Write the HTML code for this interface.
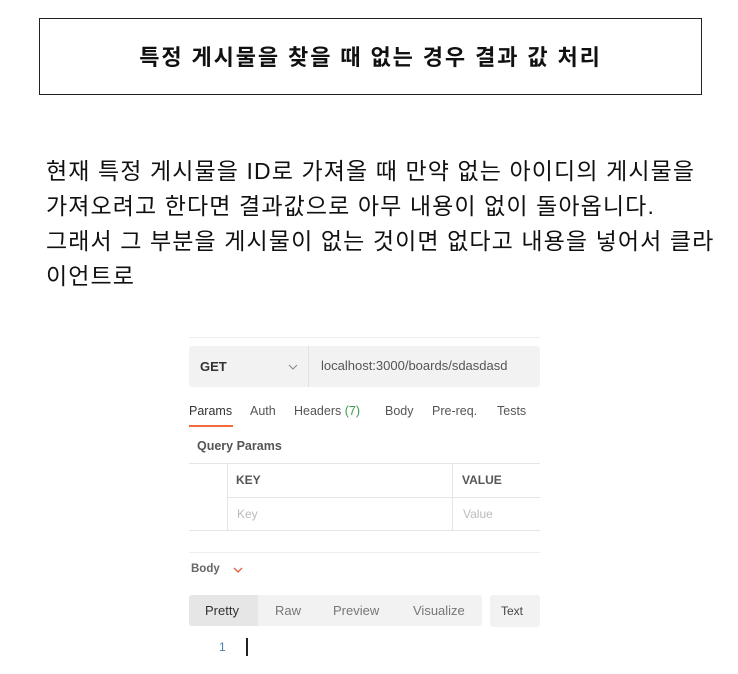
<!DOCTYPE html><html><head><meta charset="utf-8"><style>
body{margin:0;width:738px;height:674px;background:#fff;position:relative;overflow:hidden;font-family:"Liberation Sans","Noto Sans CJK KR",sans-serif;color:#111}
.a{position:absolute;white-space:nowrap}
.t{font-size:23px;line-height:35px;left:46px;letter-spacing:1.1px}
.p{font-size:12.5px;color:#555}
</style></head><body>
<div class="a" style="left:39px;top:18px;width:661px;height:75px;border:1px solid #222"></div>
<div class="a" style="left:39px;top:40px;width:663px;text-align:center;font-size:22px;font-weight:bold;letter-spacing:1.9px">특정 게시물을 찾을 때 없는 경우 결과 값 처리</div>
<div class="a t" style="top:154px">현재 특정 게시물을 ID로 가져올 때 만약 없는 아이디의 게시물을</div>
<div class="a t" style="top:189px">가져오려고 한다면 결과값으로 아무 내용이 없이 돌아옵니다.</div>
<div class="a t" style="top:224px">그래서 그 부분을 게시물이 없는 것이면 없다고 내용을 넣어서 클라</div>
<div class="a t" style="top:259px">이언트로</div>

<div class="a" style="left:189px;top:337px;width:351px;height:1px;background:#eee"></div>
<div class="a" style="left:189px;top:346px;width:351px;height:41px;background:#f2f2f2;border-radius:3px"></div>
<div class="a" style="left:308px;top:346px;width:1px;height:41px;background:#e2e2e2"></div>
<div class="a" style="left:200px;top:359px;font-size:13px;font-weight:bold;color:#333">GET</div>
<svg class="a" style="left:288px;top:364px" width="10" height="6"><path d="M1 1l4 4 4-4" fill="none" stroke="#888" stroke-width="1"/></svg>
<div class="a" style="left:321px;top:358px;font-size:13px;color:#555">localhost:3000/boards/sdasdasd</div>
<div class="a p" style="left:189px;top:404px;color:#333">Params</div>
<div class="a p" style="left:250px;top:404px">Auth</div>
<div class="a p" style="left:294px;top:404px">Headers <span style="color:#3a9a4a">(7)</span></div>
<div class="a p" style="left:385px;top:404px">Body</div>
<div class="a p" style="left:432px;top:404px">Pre-req.</div>
<div class="a p" style="left:497px;top:404px">Tests</div>
<div class="a" style="left:189px;top:425px;width:44px;height:2px;background:#f26b3a"></div>
<div class="a" style="left:197px;top:439px;font-size:12.5px;color:#555;font-weight:bold">Query Params</div>
<div class="a" style="left:189px;top:463px;width:351px;height:1px;background:#e5e5e5"></div>
<div class="a" style="left:227px;top:497px;width:313px;height:1px;background:#e5e5e5"></div>
<div class="a" style="left:189px;top:530px;width:351px;height:1px;background:#e5e5e5"></div>
<div class="a" style="left:227px;top:463px;width:1px;height:67px;background:#e5e5e5"></div>
<div class="a" style="left:452px;top:463px;width:1px;height:67px;background:#e5e5e5"></div>
<div class="a" style="left:236px;top:473px;font-size:12px;font-weight:bold;color:#555">KEY</div>
<div class="a" style="left:462px;top:473px;font-size:12px;font-weight:bold;color:#555">VALUE</div>
<div class="a" style="left:237px;top:507px;font-size:12px;color:#bbb">Key</div>
<div class="a" style="left:463px;top:507px;font-size:12px;color:#bbb">Value</div>
<div class="a" style="left:189px;top:552px;width:351px;height:1px;background:#eee"></div>
<div class="a" style="left:191px;top:563px;font-size:11.5px;font-weight:bold;color:#666">Body</div>
<svg class="a" style="left:233px;top:567px" width="10" height="6"><path d="M1 1l4 4 4-4" fill="none" stroke="#e0603a" stroke-width="1.3"/></svg>
<div class="a" style="left:189px;top:595px;width:293px;height:31px;background:#f2f2f2;border-radius:3px"></div>
<div class="a" style="left:189px;top:595px;width:69px;height:31px;background:#e6e6e6;border-radius:3px 0 0 3px"></div>
<div class="a" style="left:205px;top:603px;font-size:13px;color:#333">Pretty</div>
<div class="a" style="left:275px;top:603px;font-size:13px;color:#777">Raw</div>
<div class="a" style="left:333px;top:603px;font-size:13px;color:#777">Preview</div>
<div class="a" style="left:413px;top:603px;font-size:13px;color:#777">Visualize</div>
<div class="a" style="left:490px;top:595px;width:50px;height:32px;background:#f2f2f2;border-radius:3px"></div>
<div class="a" style="left:501px;top:604px;font-size:12px;color:#444">Text</div>
<div class="a" style="left:219px;top:640px;font-size:12px;color:#4a7fa5">1</div>
<div class="a" style="left:246px;top:638px;width:2px;height:18px;background:#222"></div>
</body></html>
